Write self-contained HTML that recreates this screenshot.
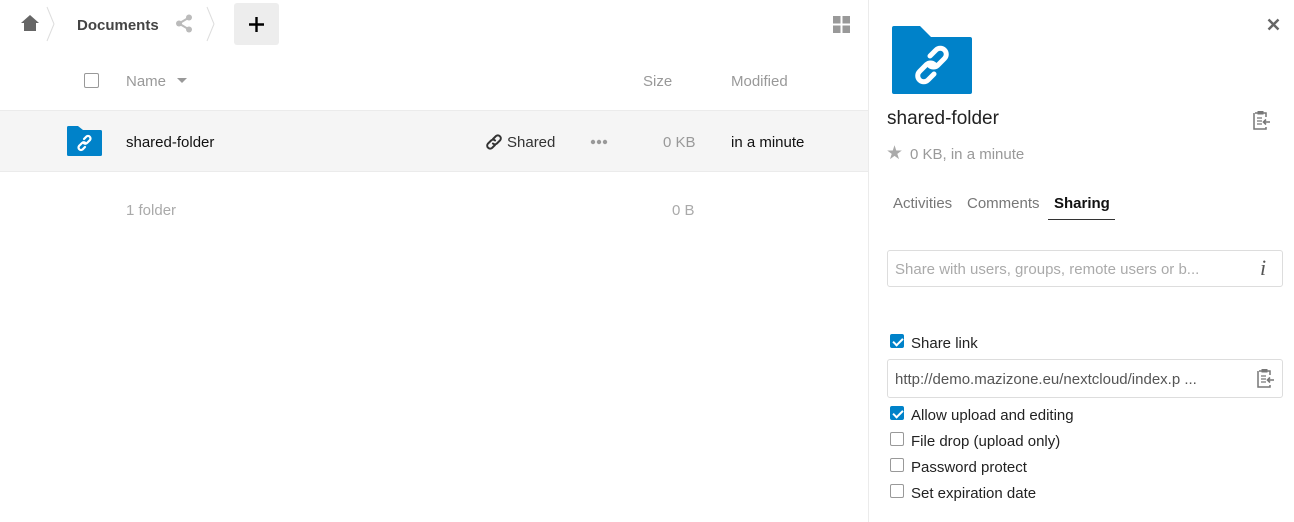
<!DOCTYPE html>
<html><head><meta charset="utf-8"><style>
*{box-sizing:border-box;margin:0;padding:0}
body{width:1294px;height:522px;overflow:hidden;background:#fff;font-family:"Liberation Sans",sans-serif;color:#222;position:relative;font-size:14px}
.a{position:absolute;white-space:nowrap}
.g{color:#999}
.cb{position:absolute;width:14px;height:14px;border:1px solid #999;border-radius:2px;background:#fff}
.cb.on{background:#0082c9;border-color:#0082c9}
.cb.on::after{content:"";position:absolute;left:3.5px;top:0.5px;width:4px;height:8px;border:solid #fff;border-width:0 2px 2px 0;transform:rotate(45deg)}
</style></head><body>
<svg class="a" style="left:20px;top:14px" width="20" height="18" viewBox="0 0 20 18"><path d="M10 1L1 9h3v8h12V9h3z" fill="#666"/></svg>
<svg class="a" style="left:46px;top:6px" width="10" height="36"><path d="M1 1l7 17-7 17" stroke="#ddd" fill="none"/></svg>
<div class="a" style="left:77px;top:17px;font-size:15px;font-weight:bold;color:#444">Documents</div>
<svg class="a" style="left:175px;top:14px" width="18" height="19" viewBox="0 0 18 19"><circle cx="14" cy="3.5" r="3" fill="#bbb"/><circle cx="4" cy="9.5" r="3" fill="#bbb"/><circle cx="14" cy="15.5" r="3" fill="#bbb"/><path d="M14 3.5L4 9.5 14 15.5" stroke="#bbb" stroke-width="2" fill="none"/></svg>
<svg class="a" style="left:206px;top:6px" width="10" height="36"><path d="M1 1l7 17-7 17" stroke="#ddd" fill="none"/></svg>
<div class="a" style="left:234px;top:3px;width:45px;height:42px;background:#ededed;border-radius:3px"></div>
<svg class="a" style="left:248px;top:16px" width="17" height="17"><path d="M8.5 1v15M1 8.5h15" stroke="#000" stroke-width="2.4"/></svg>
<svg class="a" style="left:833px;top:16px" width="17" height="17"><rect x="0" y="0" width="7.5" height="7.5" fill="#999"/><rect x="9.5" y="0" width="7.5" height="7.5" fill="#999"/><rect x="0" y="9.5" width="7.5" height="7.5" fill="#999"/><rect x="9.5" y="9.5" width="7.5" height="7.5" fill="#999"/></svg>
<div class="cb" style="left:84px;top:73px;width:15px;height:15px"></div>
<div class="a g" style="left:126px;top:73px;font-size:15px">Name</div>
<svg class="a" style="left:177px;top:78px" width="10" height="6"><path d="M0 0h10L5 5z" fill="#999"/></svg>
<div class="a g" style="left:643px;top:73px;font-size:15px">Size</div>
<div class="a g" style="left:731px;top:73px;font-size:15px">Modified</div>
<div class="a" style="left:0;top:110px;width:868px;height:62px;background:#f5f5f5;border-top:1px solid #ebebeb;border-bottom:1px solid #ebebeb"></div>
<svg class="a" style="left:67px;top:126px" width="35" height="30" viewBox="0 0 35 30"><path d="M0 1.5Q0 0 1.5 0H11l5 4h17.5Q35 4 35 5.5V28.5Q35 30 33.5 30H1.5Q0 30 0 28.5z" fill="#0082c9"/><g stroke="#fff" stroke-width="2.2" fill="none" stroke-linecap="round"><path d="M17 13l2.5-2.5a2.5 2.5 0 0 1 3.5 3.5l-3 3a2.5 2.5 0 0 1-3.5 0"/><path d="M18 21l-2.5 2.5a2.5 2.5 0 0 1-3.5-3.5l3-3a2.5 2.5 0 0 1 3.5 0"/></g></svg>
<div class="a" style="left:126px;top:134px;font-size:15px;color:#111">shared-folder</div>
<svg class="a" style="left:485px;top:133px" width="18" height="18" viewBox="0 0 18 18"><g stroke="#333" stroke-width="2" fill="none" stroke-linecap="round"><path d="M8 6l3-3a3 3 0 0 1 4.2 4.2l-3.3 3.3a3 3 0 0 1-4 0"/><path d="M10 12l-3 3a3 3 0 0 1-4.2-4.2l3.3-3.3a3 3 0 0 1 4 0"/></g></svg>
<div class="a" style="left:507px;top:134px;font-size:15px;color:#333">Shared</div>
<svg class="a" style="left:590px;top:139px" width="18" height="6"><circle cx="3" cy="3" r="2.2" fill="#999"/><circle cx="9" cy="3" r="2.2" fill="#999"/><circle cx="15" cy="3" r="2.2" fill="#999"/></svg>
<div class="a g" style="left:663px;top:134px;font-size:15px">0 KB</div>
<div class="a" style="left:731px;top:134px;font-size:15px;color:#111">in a minute</div>
<div class="a g" style="left:126px;top:202px;font-size:15px;color:#aaa">1 folder</div>
<div class="a g" style="left:672px;top:202px;font-size:15px;color:#aaa">0 B</div>
<div class="a" style="left:868px;top:0;width:1px;height:522px;background:#ebebeb"></div>
<svg class="a" style="left:892px;top:26px" width="80" height="68" viewBox="0 0 80 68"><path d="M0 2Q0 0 2 0H28l11 11H78Q80 11 80 13V66Q80 68 78 68H2Q0 68 0 66z" fill="#0082c9"/><g stroke="#fff" stroke-width="5" fill="none" stroke-linecap="round"><path d="M38 30l6-6a6 6 0 0 1 8.5 8.5l-7 7a6 6 0 0 1-8 0"/><path d="M42 48l-6 6a6 6 0 0 1-8.5-8.5l7-7a6 6 0 0 1 8 0"/></g></svg>
<svg class="a" style="left:1267px;top:18px" width="13" height="13"><path d="M1.5 1.5l10 10M11.5 1.5l-10 10" stroke="#666" stroke-width="2.4"/></svg>
<div class="a" style="left:887px;top:108px;font-size:19px;color:#222">shared-folder</div>
<svg class="a" style="left:1252px;top:110px" width="19" height="20" viewBox="0 0 19 20"><path d="M3 3h3M11 3h3v4M14 17v2H2V3" stroke="#777" stroke-width="1.5" fill="none"/><rect x="5.5" y="1" width="6" height="3.5" fill="#777"/><path d="M5 8h5M5 11h5M5 14h5" stroke="#777" stroke-width="1.3"/><path d="M18 12h-6M14 9.5L11.5 12 14 14.5" stroke="#777" stroke-width="1.6" fill="none"/></svg>
<div class="a" style="left:886px;top:142px;font-size:19px;color:#aaa">★</div>
<div class="a g" style="left:910px;top:146px;font-size:15px">0 KB, in a minute</div>
<div class="a" style="left:893px;top:195px;font-size:15px;color:#777">Activities</div>
<div class="a" style="left:967px;top:195px;font-size:15px;color:#777">Comments</div>
<div class="a" style="left:1054px;top:195px;font-size:15px;font-weight:bold;color:#111">Sharing</div>
<div class="a" style="left:1048px;top:219px;width:67px;height:1px;background:#333"></div>
<div class="a" style="left:887px;top:250px;width:396px;height:37px;border:1px solid #ddd;border-radius:3px"></div>
<div class="a" style="left:895px;top:261px;font-size:15px;color:#aaa">Share with users, groups, remote users or b...</div>
<div class="a" style="left:1260px;top:255px;font-size:22px;font-style:italic;font-family:'Liberation Serif',serif;color:#555">i</div>
<div class="cb on" style="left:890px;top:334px"></div>
<div class="a" style="left:911px;top:335px;font-size:15px">Share link</div>
<div class="a" style="left:887px;top:359px;width:396px;height:39px;border:1px solid #ddd;border-radius:3px"></div>
<div class="a" style="left:895px;top:371px;font-size:15px;color:#555">http://demo.mazizone.eu/nextcloud/index.p ...</div>
<svg class="a" style="left:1256px;top:368px" width="19" height="20" viewBox="0 0 19 20"><path d="M3 3h3M11 3h3v4M14 17v2H2V3" stroke="#777" stroke-width="1.5" fill="none"/><rect x="5.5" y="1" width="6" height="3.5" fill="#777"/><path d="M5 8h5M5 11h5M5 14h5" stroke="#777" stroke-width="1.3"/><path d="M18 12h-6M14 9.5L11.5 12 14 14.5" stroke="#777" stroke-width="1.6" fill="none"/></svg>
<div class="cb on" style="left:890px;top:406px"></div>
<div class="a" style="left:911px;top:407px;font-size:15px">Allow upload and editing</div>
<div class="cb" style="left:890px;top:432px"></div>
<div class="a" style="left:911px;top:433px;font-size:15px">File drop (upload only)</div>
<div class="cb" style="left:890px;top:458px"></div>
<div class="a" style="left:911px;top:459px;font-size:15px">Password protect</div>
<div class="cb" style="left:890px;top:484px"></div>
<div class="a" style="left:911px;top:485px;font-size:15px">Set expiration date</div>
</body></html>
